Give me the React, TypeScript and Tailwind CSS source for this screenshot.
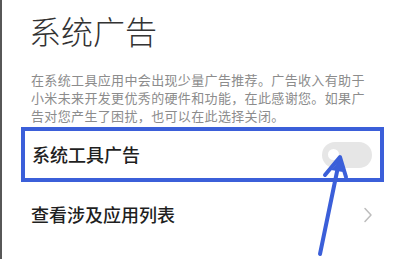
export default function App() {
  return (
    <div className="relative w-[400px] h-[259px] overflow-hidden bg-white border-l-2 border-[#575757] font-['Noto_Sans_CJK_SC','Noto_Sans',sans-serif]">
      {/* Title */}
      <h1 className="pl-[27px] pt-[14px] text-[32px] leading-none font-light text-[#333]">
        系统广告
      </h1>

      {/* Description */}
      <p className="mt-[25px] pl-[29px] text-[13px] leading-[18px] tracking-[0.35px] text-[#8c8c8c]">
        在系统工具应用中会出现少量广告推荐。广告收入有助于
        <br />
        小米未来开发更优秀的硬件和功能，在此感谢您。如果广
        <br />
        告对您产生了困扰，也可以在此选择关闭。
      </p>

      {/* Switch row (highlighted) */}
      <div className="mt-[2px] ml-[19px] mr-[16px] h-[55px] border-4 border-[#3b5fd9] flex items-center justify-between pl-[7px] pr-[8px]">
        <span className="text-[18px] font-medium text-[#1f1f1f]">系统工具广告</span>
        <div className="w-[50px] h-[26px] rounded-full bg-[#e6e6e6] flex items-center pl-[6px]">
          <div className="w-[11px] h-[11px] rounded-full bg-white" />
        </div>
      </div>

      {/* Link row */}
      <div className="h-[65px] flex items-center justify-between pl-[29px] pr-[27px]">
        <span className="text-[18px] font-medium text-[#1f1f1f]">查看涉及应用列表</span>
        <svg width="10" height="16" viewBox="0 0 10 16" fill="none">
          <path d="M2 1.5 L8 8 L2 14.5" stroke="#bdbdbd" strokeWidth="1.5" strokeLinecap="round" strokeLinejoin="round" />
        </svg>
      </div>

      {/* Annotation arrow */}
      <svg className="absolute left-0 top-0" width="400" height="259" viewBox="0 0 400 259" fill="none">
        <path d="M318 254 L337 162" stroke="#3b5fd9" strokeWidth="4" strokeLinecap="round" />
        <path d="M323 175 L338 157 L344 177" stroke="#3b5fd9" strokeWidth="4" strokeLinecap="round" strokeLinejoin="round" />
        <path d="M329 170 L338 160 L341 172 Z" fill="#3b5fd9" />
      </svg>
    </div>
  );
}
